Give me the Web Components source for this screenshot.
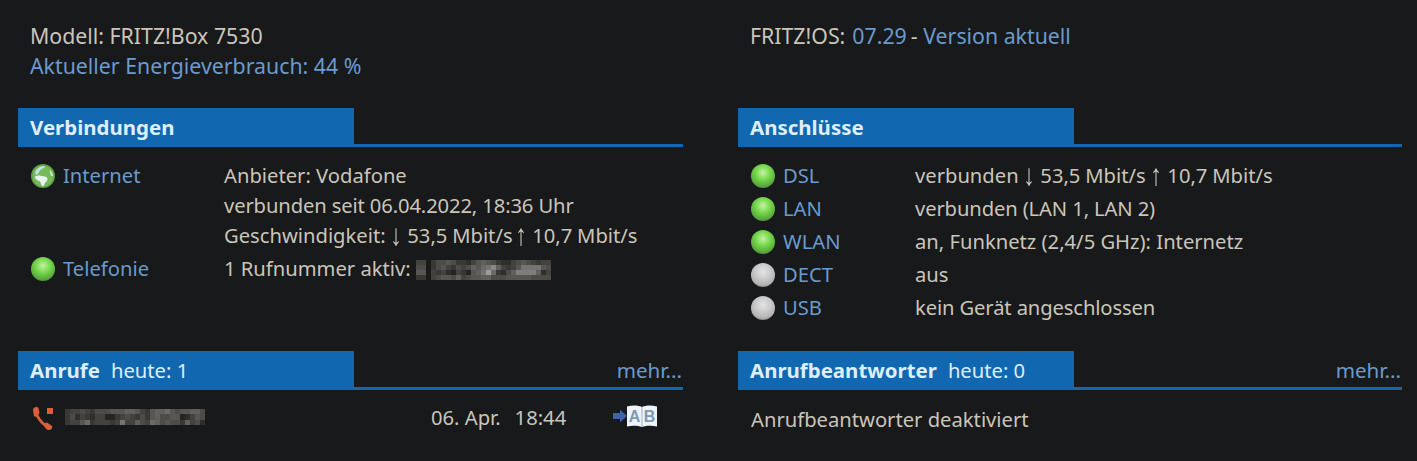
<!DOCTYPE html>
<html>
<head>
<meta charset="utf-8">
<title>FRITZ!Box</title>
<style>
html, body { margin: 0; height: 100%; background: #18191b; }
body { overflow: hidden; color: #cbc5b9; font: 20.2px/30px "Noto Sans", "Liberation Sans", sans-serif; }
.link { color: #6a9bcf; }
.snug { letter-spacing: -.12px; }
.speed { word-spacing: -.4px; }
.gap { word-spacing: -2.5px; }
.arr { display: inline-block; width: 12px; text-align: center; font-family: "Liberation Sans", sans-serif; font-size: 24px; line-height: 20px; transform: scaleY(1.25); will-change: transform; }
.ver { margin: 0 -1.5px 0 1.5px; }
</style>
</head>
<body>
<fritz-page>
  <fritz-column>
    <fritz-info>
      <div>Modell: FRITZ!Box 7530</div>
      <div class="link">Aktueller Energieverbrauch: 44 %</div>
    </fritz-info>
    <fritz-section title="Verbindungen" tall>
      <fritz-row led="globe" label="Internet">
        <div>Anbieter: Vodafone</div>
        <div class="snug">verbunden seit 06.04.2022, 18:36 Uhr</div>
        <div class="speed">Geschwindigkeit: <span class="arr">↓</span> 53,5 Mbit/s<span class="gap"> </span><span class="arr">↑</span> 10,7 Mbit/s</div>
      </fritz-row>
      <fritz-row led="green" label="Telefonie">1 Rufnummer aktiv: <blur-bar kind="phone"></blur-bar></fritz-row>
    </fritz-section>
    <fritz-section title="Anrufe" sub="heute: 1" more>
      <fritz-call></fritz-call>
    </fritz-section>
  </fritz-column>
  <fritz-column>
    <fritz-info>
      <div>FRITZ!OS: <span class="link ver">07.29</span> - <span class="link">Version aktuell</span></div>
    </fritz-info>
    <fritz-section title="Anschlüsse" tall>
      <fritz-row led="green" label="DSL" wide><span class="speed">verbunden <span class="arr">↓</span> 53,5 Mbit/s <span class="arr">↑</span> 10,7 Mbit/s</span></fritz-row>
      <fritz-row led="green" label="LAN" wide><span class="snug">verbunden (LAN 1, LAN 2)</span></fritz-row>
      <fritz-row led="green" label="WLAN" wide>an, Funknetz (2,4/5 GHz): Internetz</fritz-row>
      <fritz-row led="grey" label="DECT" wide>aus</fritz-row>
      <fritz-row led="grey" label="USB" wide><span class="snug">kein Gerät angeschlossen</span></fritz-row>
    </fritz-section>
    <fritz-section title="Anrufbeantworter" sub="heute: 0" more>
      <div style="padding: 2px 0 0 13px">Anrufbeantworter deaktiviert</div>
    </fritz-section>
  </fritz-column>
</fritz-page>
<script>
function define(name, css, html, setup) {
  customElements.define(name, class extends HTMLElement {
    connectedCallback() {
      if (this.shadowRoot) return;
      const root = this.attachShadow({ mode: 'open' });
      root.innerHTML = `<style>${css}</style>` + (typeof html === 'function' ? html(this) : html);
      if (setup) setup(this, root);
    }
  });
}

define('fritz-page', `:host { display: grid; grid-template-columns: 665px 664px; column-gap: 55px; padding: 21px 0 0 18px; }`, `<slot></slot>`);
define('fritz-column', `:host { display: block; }`, `<slot></slot>`);
define('fritz-info', `:host { display: block; padding-left: 12px; height: 87px; font-size: 21.3px; white-space: nowrap; }`, `<slot></slot>`);

define('fritz-section', `
  :host { display: block; }
  .head { display: flex; justify-content: space-between; align-items: flex-end; border-bottom: 3px solid #1168b1; height: 36px; }
  .tab { width: 324px; height: 36px; padding-left: 12px; background: #1168b1; color: #deeefa; display: flex; align-items: center; white-space: nowrap; }
  .tab > * { padding-top: 2px; }
  b { font-weight: 700; font-size: 20.45px; }
  .sub { margin-left: 11px; }
  .more { color: #6a9bcf; line-height: 30px; height: 30px; padding: 0 1px 2px 0; font-size: 20.6px; }
  .body { padding-top: 12px; }
  :host([tall]) .body { height: 204px; box-sizing: border-box; padding-top: 13px; }
`, el => `
  <div class="head">
    <div class="tab"><b>${el.getAttribute('title')}</b>${el.hasAttribute('sub') ? `<span class="sub">${el.getAttribute('sub')}</span>` : ''}</div>
    ${el.hasAttribute('more') ? '<span class="more">mehr...</span>' : ''}
  </div>
  <div class="body"><slot></slot></div>`);

const LEDS = {
  green: ['#c4f2a6', '#76d94c', '#5aa83c', '#53883f'],
  grey: ['#e4e4e4', '#cbcbcb', '#b2b2b2', '#7e7e7e']
};
function led(kind) {
  if (kind === 'globe') {
    return `<svg width="24" height="24" viewBox="0 0 24 24">
      <circle cx="12" cy="12" r="12" fill="#5f9c45"/>
      <circle cx="12" cy="12" r="10.5" fill="#78b95a"/>
      <path d="M5 6.500c1.500-2.500 5-4.500 8-4.500 1 .5 1 1.500 0 2-2 .5-3.500 1.500-4.500 3-.5 1.500-1.500 3-3 4-1.500-.5-1.500-3-.5-4.500z" fill="#bfe2e8"/>
      <path d="M4 12.500c2-1 5-1.500 7-.5 3 0 5 1 5.500 2.500.3 2-1.500 3-2.500 4.500-.7 1.500-1 3-2.500 3.500-1.500-1-1.500-3-2-4.500-1-1-3.500-1.500-4.500-3-.7-.8-1.300-1.500-1-2.500z" fill="#e7f3ee"/>
      <path d="M19 6c1.800 1.500 3 3.500 3 6-.8.500-2 0-2.500-1.500-.3-1.500-1-3-.5-4.500z" fill="#c9e6d2"/>
    </svg>`;
  }
  const c = LEDS[kind];
  return `<svg width="24" height="24" viewBox="0 0 24 24">
    <defs><radialGradient id="g" cx=".5" cy=".36" r=".66">
      <stop offset="0" stop-color="${c[0]}"/><stop offset=".45" stop-color="${c[1]}"/><stop offset=".85" stop-color="${c[2]}"/><stop offset="1" stop-color="${c[3]}"/>
    </radialGradient></defs>
    <circle cx="12" cy="12" r="12" fill="url(#g)"/>
  </svg>`;
}

define('fritz-row', `
  :host { display: grid; grid-template-columns: 193px 1fr; padding: 0 0 3px 13px; }
  :host([wide]) { grid-template-columns: 164px 1fr; }
  .name { display: flex; align-items: center; gap: 8px; height: 30px; color: #6a9bcf; }
  svg { display: block; flex: none; margin-top: 2px; }
`, el => `
  <div class="name">${led(el.getAttribute('led'))}<span>${el.getAttribute('label')}</span></div>
  <div><slot></slot></div>`);

// pixelated number, one hex digit per mosaic block
const MOSAIC = {
  phone: { w: 5, h: 5, top: 7, rows: [
    '440355653324676532245654344',
    '550356435457689b74346999965',
    '660434214316 79d83257aaaa72',
    '330456657456677555666665555'
  ] },
  caller: { w: 5, h: 5.34, top: 0, rows: [
    '3445435556667764367786566775',
    '3524324411345435367556612465',
    '3446834443494475487565537452'
  ] }
};
define('blur-bar', `
  :host { display: inline-grid; vertical-align: top; }
  i { display: block; }
`, el => {
  const m = MOSAIC[el.getAttribute('kind')];
  const rows = m.rows.map(r => r.replace(/ /g, ''));
  const n = rows[0].length;
  const cells = rows.map(r => [...r.padEnd(n, '4').slice(0, n)].map(d => {
    const v = 26 + parseInt(d, 16) * 10;
    return `<i style="background:rgb(${v + 2},${v},${v - 3})"></i>`;
  }).join('')).join('');
  return `<style>:host { grid-template-columns: repeat(${n}, ${m.w}px); grid-auto-rows: ${m.h}px; margin-top: ${m.top}px; }</style>${cells}`;
});

define('fritz-call', `
  :host { display: flex; padding-left: 15px; align-items: center; height: 30px; }
  .left { display: flex; align-items: center; gap: 12px; width: 398px; }
  .when { display: flex; gap: 14px; width: 182px; white-space: nowrap; }
  svg { display: block; flex: none; }
`, `
  <div class="left">
    <svg width="20" height="24" viewBox="0 0 20 24" style="margin-top:2px">
      <path d="M2.500 3C2.500 9 8 18 16.500 21.500" fill="none" stroke="#dc5f3c" stroke-width="2.800"/>
      <path d="M0 4c0-3 4-4 5.500-2l1 5-2.500 3.500-3 0zM10 18l4-1.500 5 3.500c1 2-1 4-3 4-2.500 0-4-2-6-6z" fill="#dc5f3c"/>
      <rect x="14" y="2" width="6" height="6" fill="#dc5f3c"/>
    </svg>
    <blur-bar kind="caller"></blur-bar>
  </div>
  <div class="when"><span>06. Apr.</span><span>18:44</span></div>
  <svg width="44" height="24" viewBox="0 0 44 24" style="margin-top:-2px">
    <path d="M0 9h7V5.500l7 6.500-7 6.500V15H0z" fill="#3e62a6"/>
    <path d="M14 2.500c5-1.500 11-1.500 15 .5 4-2 10-2 15-.5v20c-5-1.200-11-1-15 .5-4-1.500-10-1.700-15-.5z" fill="#eef4f8"/>
    <path d="M29 3v20" stroke="#9db4c6" stroke-width="1"/>
    <text x="21.500" y="17.500" text-anchor="middle" font-family="Liberation Sans" font-weight="700" font-size="16" fill="#7d9ab4">A</text>
    <text x="36.500" y="17.500" text-anchor="middle" font-family="Liberation Sans" font-weight="700" font-size="16" fill="#7d9ab4">B</text>
  </svg>
`);
</script>
</body>
</html>
